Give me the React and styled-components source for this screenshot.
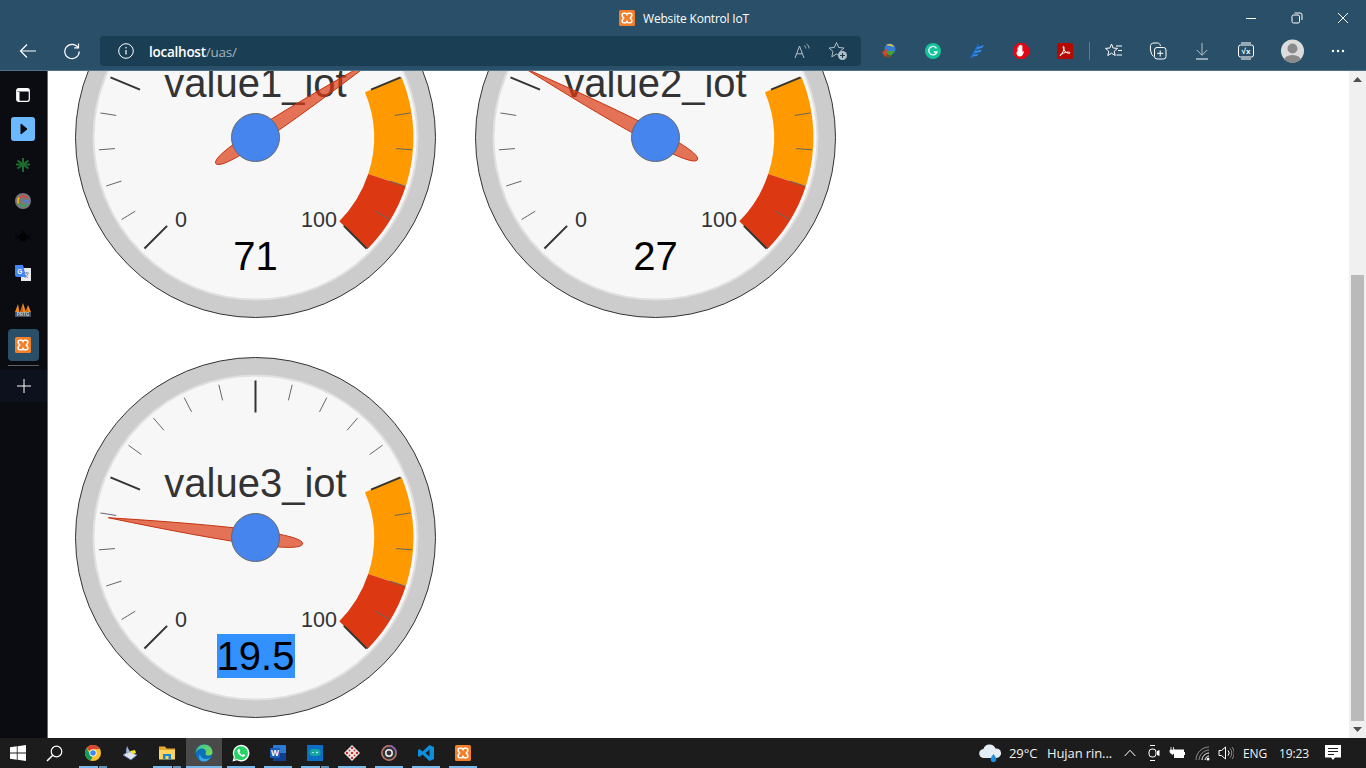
import React from "react";
import styled, { createGlobalStyle } from "styled-components";

const GlobalStyle = createGlobalStyle`
  html, body {
    margin: 0;
    padding: 0;
    overflow: hidden;
    background: #fff;
    font-family: "Open Sans", "Liberation Sans", sans-serif;
  }
`;

const Window = styled.div`
  width: 1366px;
  height: 768px;
  display: flex;
  flex-direction: column;
  overflow: hidden;
`;

const TitleBar = styled.div`
  height: 36px;
  flex: none;
  background: #2a5069;
  display: grid;
  grid-template-columns: 1fr auto 1fr;
  align-items: center;
  color: #fff;
`;

const TitleText = styled.div`
  grid-column: 2;
  display: flex;
  align-items: center;
  gap: 8px;
  font-size: 12px;
  letter-spacing: -0.2px;
  padding-left: 2px;
`;

const WindowControls = styled.div`
  grid-column: 3;
  justify-self: end;
  display: flex;
`;

const ControlSlot = styled.div`
  width: 46px;
  height: 36px;
  display: flex;
  align-items: center;
  justify-content: center;
`;

const Toolbar = styled.div`
  height: 34px;
  flex: none;
  background: #2a5069;
  border-bottom: 1px solid #4f7489;
  display: flex;
  align-items: flex-start;
  padding-left: 6px;
`;

const ToolButton = styled.div`
  width: 44px;
  height: 30px;
  flex: none;
  margin-left: ${(props) => props.$shift || 0}px;
  display: flex;
  align-items: center;
  justify-content: center;
`;

const AddressBar = styled.div`
  width: 761px;
  height: 30px;
  margin: 0 6px 0 6px;
  flex: none;
  box-sizing: border-box;
  background: #1a3e54;
  border-radius: 4px;
  display: flex;
  align-items: center;
  padding: 0 5px 0 18px;
  color: #fff;
`;

const AddressAction = styled.div`
  width: 36px;
  height: 30px;
  flex: none;
  display: flex;
  align-items: center;
  justify-content: center;
`;

const Url = styled.div`
  margin-left: 15px;
  padding-top: 1px;
  flex: 1;
  font-size: 13.5px;
  font-weight: 600;
  letter-spacing: -0.25px;
  span {
    font-weight: 400;
    color: #a3b3bd;
  }
`;

const Divider = styled.div`
  width: 1px;
  height: 18px;
  margin: 6px 2px 0 2px;
  background: #5d7c8f;
  flex: none;
`;

const Main = styled.div`
  flex: 1;
  min-height: 0;
  display: flex;
`;

const Sidebar = styled.div`
  width: 46px;
  padding: 12px 1px 0 0;
  flex: none;
  background: #0a0c12;
  border-right: 1px solid #4f7489;
  display: flex;
  flex-direction: column;
  align-items: center;
`;

const TabSlot = styled.div`
  height: 24px;
  margin-bottom: 4px;
  flex: none;
  display: flex;
  align-items: center;
  justify-content: center;
`;

const SideSlot = styled.div`
  width: 31px;
  height: 36px;
  flex: none;
  display: flex;
  align-items: center;
  justify-content: center;
`;

const ActiveSlot = styled.div`
  width: 31px;
  height: 32px;
  margin-top: 2px;
  flex: none;
  background: #2a5069;
  border-radius: 4px;
  display: flex;
  align-items: center;
  justify-content: center;
`;

const SideRule = styled.div`
  width: 31px;
  height: 1px;
  margin-top: 4px;
  flex: none;
  background: #5b5e63;
`;

const AddSlot = styled.div`
  width: 47px;
  height: 32px;
  margin: 4px -1px 0 0;
  flex: none;
  background: #0d111d;
  display: flex;
  align-items: center;
  justify-content: center;
`;

const Page = styled.div`
  flex: 1;
  min-width: 0;
  overflow: hidden;
  background: #fff;
`;

const GaugeGrid = styled.div`
  display: grid;
  grid-template-columns: repeat(2, 400px);
  grid-auto-rows: 400px;
  margin: -133px 0 0 8px;
`;

const GaugeSvg = styled.svg`
  display: block;
  font-family: "Liberation Sans", Arial, sans-serif;
`;

const Scrollbar = styled.div`
  width: 17px;
  flex: none;
  background: #f0f0f0;
  display: flex;
  flex-direction: column;
  align-items: center;
`;

const ScrollArrow = styled.div`
  height: 17px;
  flex: none;
  display: flex;
  align-items: center;
  justify-content: center;
`;

const ScrollTrack = styled.div`
  flex: 1;
  align-self: stretch;
  padding: 187px 2px 0 2px;
  min-height: 0;
`;

const ScrollThumb = styled.div`
  height: 446px;
  background: #bababa;
`;

const Taskbar = styled.div`
  height: 30px;
  flex: none;
  background: #1c1c1c;
  display: flex;
  align-items: stretch;
  color: #fff;
`;

const TaskStart = styled.div`
  width: 36px;
  flex: none;
  display: flex;
  align-items: center;
  justify-content: center;
`;

const TaskApps = styled.div`
  display: flex;
  gap: 1px;
  margin-left: 3px;
  flex: 1;
`;

const TaskApp = styled.div`
  width: 36px;
  position: relative;
  display: flex;
  align-items: center;
  justify-content: center;
  background: ${(props) => (props.$active ? "#4a4a4a" : "transparent")};

  &::after {
    content: "";
    display: ${(props) => (props.$running ? "block" : "none")};
    position: absolute;
    left: ${(props) => (props.$active ? "0" : "4px")};
    right: ${(props) => (props.$active ? "0" : "4px")};
    bottom: 0;
    height: 2px;
    background: ${(props) =>
      props.$split
        ? "linear-gradient(90deg, #76b9ed 0 68%, #1c1c1c 68% 72%, #5d93b8 72%)"
        : "#76b9ed"};
  }
`;

const Tray = styled.div`
  display: flex;
  align-items: center;
  flex: none;
  color: #f2f2f2;
`;

const TrayText = styled.div`
  margin-left: ${(props) => props.$left}px;
  width: ${(props) => props.$width}px;
  white-space: nowrap;
  font-size: ${(props) => props.$size || 13}px;
  letter-spacing: -0.1px;
`;

const TrayIcon = styled.div`
  margin-left: ${(props) => props.$left}px;
  width: ${(props) => props.$width}px;
  flex: none;
  display: flex;
  align-items: center;
  justify-content: center;
`;

const CX = 199.5;
const CY = 199.5;

function polar(r, deg) {
  const a = ((deg - 90) * Math.PI) / 180;
  return [CX + r * Math.cos(a), CY + r * Math.sin(a)];
}

function toAngle(value) {
  return -135 + (value / 100) * 270;
}

function bandPath(from, to) {
  const a0 = toAngle(from);
  const a1 = toAngle(to);
  const [x0, y0] = polar(158, a0);
  const [x1, y1] = polar(158, a1);
  const [x2, y2] = polar(118.5, a1);
  const [x3, y3] = polar(118.5, a0);
  return `M${x0} ${y0}A158 158 0 0 1 ${x1} ${y1}L${x2} ${y2}A118.5 118.5 0 0 0 ${x3} ${y3}Z`;
}

function needlePath(value) {
  const a = toAngle(value);
  const dir = (along, side) => {
    const [ax, ay] = polar(along, a);
    const rad = (a * Math.PI) / 180;
    return [ax + side * Math.cos(rad), ay + side * Math.sin(rad)];
  };
  const tip = dir(148.5, 0);
  const tail = dir(-47.5, 0);
  const c1 = dir(-47.5, 14);
  const c2 = dir(-47.5, -14);
  return `M${tip[0]} ${tip[1]}Q${c1[0]} ${c1[1]} ${tail[0]} ${tail[1]}Q${c2[0]} ${c2[1]} ${tip[0]} ${tip[1]}Z`;
}

const ticks = [];
for (let i = 0; i <= 20; i++) {
  ticks.push({ angle: -135 + i * 13.5, major: i % 5 === 0 });
}

function Gauge({ label, value, selected }) {
  const text = String(value);
  return (
    <GaugeSvg width="400" height="400" viewBox="0 0 400 400">
      <circle cx={CX} cy={CY} r="180" fill="#ccc" stroke="#333" strokeWidth="1" />
      <circle cx={CX} cy={CY} r="162" fill="#f7f7f7" stroke="#e0e0e0" strokeWidth="2" />
      <path d={bandPath(75, 90)} fill="#ff9900" />
      <path d={bandPath(90, 100)} fill="#dc3912" />
      {ticks.map((t) => {
        const [x0, y0] = polar(t.major ? 125 : 141, t.angle);
        const [x1, y1] = polar(157, t.angle);
        return (
          <line
            key={t.angle}
            x1={x0}
            y1={y0}
            x2={x1}
            y2={y1}
            stroke={t.major ? "#333" : "#666"}
            strokeWidth={t.major ? 2 : 1}
          />
        );
      })}
      <text x={CX} y={CY - 40.5} fontSize="40" fill="#333" textAnchor="middle">
        {label}
      </text>
      <text x={CX - 74.5} y={CY + 89} fontSize="21.5" fill="#333" textAnchor="middle">
        0
      </text>
      <text x={CX + 63.5} y={CY + 89} fontSize="21.5" fill="#333" textAnchor="middle">
        100
      </text>
      {selected && <rect x={CX - 38.5} y={CY + 96.5} width="78" height="44" fill="#3390ff" />}
      <text x={CX} y={CY + 132} fontSize="40" fill="#000" textAnchor="middle">
        {text}
      </text>
      <path d={needlePath(value)} fill="#dc3912" fillOpacity="0.7" stroke="#c63310" strokeWidth="1" />
      <circle cx={CX} cy={CY} r="24" fill="#4684ee" stroke="#666" strokeWidth="1" />
    </GaugeSvg>
  );
}

const line = { fill: "none", stroke: "#fff", strokeWidth: 1.2 };
const dim = { fill: "none", stroke: "#b4c0c8", strokeWidth: 1 };

function Xampp({ size = 16 }) {
  return (
    <svg width={size} height={size} viewBox="0 0 16 16">
      <rect width="16" height="16" rx="1.5" fill="#f47f2b" />
      <path
        d="M5 3.2h1.6c.8 0 1 .6 1.4 1.4.4-.8.6-1.4 1.4-1.4H11c1.2 0 1.9 1 1.9 2s-.7 1.7-1.6 2.8c.9 1.1 1.6 1.8 1.6 2.8s-.7 2-1.9 2H9.400c-.8 0-1-.6-1.400-1.400-.4.8-.6 1.400-1.400 1.400H5c-1.200 0-1.900-1-1.900-2s.7-1.700 1.600-2.800C3.800 6.900 3.100 6.200 3.100 5.200s.7-2 1.900-2z"
        fill="none"
        stroke="#fff"
        strokeWidth="1.500"
      />
    </svg>
  );
}

function Minimize() {
  return (
    <svg width="12" height="12" viewBox="0 0 12 12">
      <path d="M1 6.500h10" {...line} strokeWidth="1" />
    </svg>
  );
}

function Restore() {
  return (
    <svg width="12" height="12" viewBox="0 0 12 12">
      <rect x="1" y="3" width="7.500" height="8" rx="1.500" {...line} strokeWidth="1" />
      <path d="M3.500 1h5.500a2 2 0 0 1 2 2v5" {...line} strokeWidth="1" />
    </svg>
  );
}

function CloseX() {
  return (
    <svg width="12" height="12" viewBox="0 0 12 12">
      <path d="M1 1l10 10M11 1L1 11" {...line} strokeWidth="1" />
    </svg>
  );
}

function Back() {
  return (
    <svg width="18" height="16" viewBox="0 0 18 16">
      <path d="M17 8H1.500M8 1.500L1.500 8 8 14.500" {...line} />
    </svg>
  );
}

function Reload() {
  return (
    <svg width="18" height="18" viewBox="0 0 18 18">
      <path d="M15 5.500A7.200 7.200 0 1 0 16.200 9.500" {...line} />
      <path d="M15.500 1.500v4.300h-4.300" {...line} />
    </svg>
  );
}

function InfoCircle() {
  return (
    <svg width="16" height="16" viewBox="0 0 16 16">
      <circle cx="8" cy="8" r="7.300" {...line} strokeWidth="1" />
      <path d="M8 7v4.500" {...line} />
      <circle cx="8" cy="4.800" r=".8" fill="#fff" />
    </svg>
  );
}

function ReadAloud() {
  return (
    <svg width="16" height="16" viewBox="0 0 16 16">
      <path d="M1 15L5.500 3 10 15M2.700 10.800h5.600" {...dim} />
      <path d="M10 2.500c1.200.7 1.800 1.800 1.800 3M12.500 1c1.700 1 2.500 2.700 2.500 4.500" {...dim} strokeWidth=".9" />
    </svg>
  );
}

function StarAdd() {
  return (
    <svg width="20" height="20" viewBox="0 0 20 20">
      <path d="M8.500 1.500l2.200 5 5.300.5-4 3.500 1.200 5.300-4.700-2.800-4.700 2.800 1.200-5.300-4-3.500 5.300-.5z" {...dim} />
      <circle cx="14.500" cy="14.500" r="4.500" fill="#b4c0c8" />
      <path d="M14.500 12v5M12 14.500h5" stroke="#1a3e54" strokeWidth="1.100" />
    </svg>
  );
}

function Idm() {
  return (
    <svg width="18" height="18" viewBox="0 0 18 18">
      <circle cx="10" cy="7" r="5.500" fill="#3a7bd5" />
      <path d="M6 3c3-2 7-1 8 2-2-1-5-1-8-2z" fill="#e8c33a" />
      <path d="M2 10l5-3 1 5-3 3z" fill="#d4452c" />
      <path d="M6 9h9l-5 6z" fill="#3aa63a" />
      <path d="M4 14l5 2 3-2-3-1z" fill="#7a4d2a" />
    </svg>
  );
}

function Grammarly() {
  return (
    <svg width="16" height="16" viewBox="0 0 16 16">
      <circle cx="8" cy="8" r="8" fill="#15c39a" />
      <path d="M11.500 5.300A4.200 4.200 0 1 0 12 9H8.800" fill="none" stroke="#fff" strokeWidth="1.300" />
    </svg>
  );
}

function Feather() {
  return (
    <svg width="16" height="16" viewBox="0 0 16 16">
      <path d="M1 15L9 1l1 .5-4 8.500-3 5z" fill="#1d6fd8" />
      <path d="M7.500 4.500L15 2l-1.500 2.500-5.500 2zM6 8l7-1.500-1.500 2.500-6 1.500zM4.500 11.500l5-.5-1.500 2-4.500.5z" fill="#2f8bf0" />
    </svg>
  );
}

function AdBlock() {
  return (
    <svg width="16" height="16" viewBox="0 0 16 16">
      <path d="M4.700 0h6.600L16 4.700v6.600L11.300 16H4.700L0 11.300V4.700z" fill="#e30613" />
      <path
        d="M4.500 8V5c0-1 1.100-1 1.100 0V3c0-1 1.200-1 1.200 0V2.500c0-1 1.300-1 1.300 0V3c0-1 1.300-1 1.300 0v6c.6-1 1.900-.8 1.400.3-.6 1.500-1.300 4.200-3.800 4.200-2.300 0-3.500-1.500-3.500-4z"
        fill="#fff"
      />
    </svg>
  );
}

function PdfIcon() {
  return (
    <svg width="16" height="16" viewBox="0 0 16 16">
      <rect width="16" height="16" rx="1.500" fill="#b30b00" />
      <path
        d="M3 12.500c1.500-.8 3-3 4-6.500.3-1.500-.2-3-.7-2.500-.4.500 0 2.500 1.500 4.500 1.200 1.500 3 2.500 4.700 2.300 1-.2.500-1.200-1-1.200-2 0-4.500.6-6.500 1.800-1.500.9-2.500 1.800-2 1.600z"
        fill="none"
        stroke="#fff"
        strokeWidth="1"
      />
    </svg>
  );
}

function Favorites() {
  return (
    <svg width="18" height="18" viewBox="0 0 18 18">
      <path d="M6.500 2l1.600 4 4.400.4-3.300 2.900 1 4.200-3.700-2.300-3.700 2.300 1-4.200L.5 6.400 4.900 6z" {...line} strokeWidth="1" />
      <path d="M11 4h6M13 8.500h4M11.500 13H17" {...line} strokeWidth="1" />
    </svg>
  );
}

function Collections() {
  return (
    <svg width="18" height="18" viewBox="0 0 18 18">
      <path d="M4.500 14.500C2 12.500 1 8 1.500 3.500 2 1.500 3.500 1 5 1h3.500c1.500 0 2.500 1 3 3" {...line} strokeWidth="1" />
      <rect x="5.500" y="5.500" width="11.500" height="11.500" rx="2.500" {...line} strokeWidth="1" />
      <path d="M11.200 8.500v6M8.200 11.300h6" {...line} strokeWidth="1" />
    </svg>
  );
}

function Download() {
  return (
    <svg width="14" height="18" viewBox="0 0 14 18">
      <path d="M7 1v12M1.800 8L7 13.300 12.200 8" {...dim} />
      <path d="M1 17h12" stroke="#fff" strokeWidth="1" />
    </svg>
  );
}

function MathSolver() {
  return (
    <svg width="16" height="18" viewBox="0 0 16 18">
      <rect x=".5" y="3" width="15" height="12" rx="2" {...line} strokeWidth="1" />
      <path d="M3 1h10M3 17h10" {...line} strokeWidth="1.200" />
      <text x="8" y="12" fontSize="8" fontWeight="700" fill="#fff" textAnchor="middle" fontFamily="Liberation Sans">
        √x
      </text>
    </svg>
  );
}

function Avatar() {
  return (
    <svg width="23" height="24" viewBox="0 0 23 24">
      <defs>
        <clipPath id="avatar-clip">
          <circle cx="11.500" cy="12" r="11.500" />
        </clipPath>
      </defs>
      <circle cx="11.500" cy="12" r="11.500" fill="#dcdcdc" />
      <g clipPath="url(#avatar-clip)" fill="#8a8a8a">
        <circle cx="11.500" cy="9.500" r="5" />
        <ellipse cx="11.500" cy="22" rx="9" ry="6" />
      </g>
    </svg>
  );
}

function More() {
  return (
    <svg width="14" height="4" viewBox="0 0 14 4">
      <circle cx="2" cy="2" r="1.200" fill="#fff" />
      <circle cx="7" cy="2" r="1.200" fill="#fff" />
      <circle cx="12" cy="2" r="1.200" fill="#fff" />
    </svg>
  );
}

function TabsIcon() {
  return (
    <svg width="14" height="14" viewBox="0 0 14 14">
      <rect x=".7" y=".7" width="12.600" height="12.600" rx="2" {...line} />
      <path d="M1 3.500h12V1H1zM1 4v9h2.500V4z" fill="#fff" />
    </svg>
  );
}

function PlayTile() {
  return (
    <svg width="24" height="24" viewBox="0 0 24 24">
      <rect width="24" height="24" rx="3" fill="#6db9ff" />
      <path d="M10 7l6 5-6 5z" fill="#0a0c12" strokeWidth="1" stroke="#0a0c12" />
    </svg>
  );
}

function GreenStar() {
  return (
    <svg width="14" height="14" viewBox="0 0 14 14">
      <path d="M7 0v14M1.500 2.500l11 8M12.500 2.500l-11 8M0 6.500h14" stroke="#1f6b2c" strokeWidth="2" />
    </svg>
  );
}

function GoogleIcon() {
  return (
    <svg width="16" height="16" viewBox="0 0 16 16">
      <circle cx="8" cy="8" r="8" fill="#77777c" />
      <path d="M12 5a5 5 0 0 0-7.600-.5" fill="none" stroke="#ea4335" strokeWidth="1.500" />
      <path d="M4.400 4.500a5 5 0 0 0-.7 6" fill="none" stroke="#fbbc05" strokeWidth="1.500" />
      <path d="M3.700 10.500a5 5 0 0 0 8 .8" fill="none" stroke="#34a853" strokeWidth="1.500" />
      <path d="M11.700 11.300c1-1 1.300-2.200 1.100-3.300H8" fill="none" stroke="#4285f4" strokeWidth="1.500" />
    </svg>
  );
}

function BeeIcon() {
  return (
    <svg width="16" height="12" viewBox="0 0 16 12">
      <path d="M0 4l5 2-5 2M16 4l-5 2 5 2M6 0h4" stroke="#000" strokeWidth="1" fill="none" />
      <ellipse cx="8" cy="6" rx="4" ry="4.500" fill="#020203" />
    </svg>
  );
}

function TranslateIcon() {
  return (
    <svg width="16" height="16" viewBox="0 0 16 16">
      <rect x="6" y="3" width="10" height="13" fill="#e8eaed" />
      <path d="M9 8h5M11.500 7v1.500M13 8.500c-.5 2-2 3.500-3.500 4M10 10c.8 1.300 2 2.300 3 2.800" stroke="#7f8890" strokeWidth=".9" fill="none" />
      <path d="M0 0h8l3 12H2a2 2 0 0 1-2-2z" fill="#4285f4" />
      <text x="4.700" y="8.500" fontSize="6.500" fontWeight="700" fill="#fff" textAnchor="middle" fontFamily="Liberation Sans">
        G
      </text>
    </svg>
  );
}

function PrtgIcon() {
  return (
    <svg width="16" height="16" viewBox="0 0 16 16">
      <path d="M0 11L3 3l1.500 8zM5 11l3-9 3 9zM10.500 11L13 4l3 7z" fill="#f08a1d" />
      <path d="M5 11L8 5v6zM11 11l2-4v4z" fill="#c85f10" />
      <rect y="11" width="16" height="5" fill="#4a5164" />
      <text x="8" y="15" fontSize="4.500" fontWeight="700" fill="#cfd4dc" textAnchor="middle" fontFamily="Liberation Sans">
        PRTG
      </text>
    </svg>
  );
}

function Plus() {
  return (
    <svg width="14" height="14" viewBox="0 0 14 14">
      <path d="M7 0v14M0 7h14" {...line} strokeWidth="1" />
    </svg>
  );
}

function WinLogo() {
  return (
    <svg width="16" height="16" viewBox="0 0 16 16">
      <path d="M0 2.300l6.800-1v6.300H0zM7.600 1.200L16 0v7.600H7.600zM0 8.400h6.800v6.300l-6.800-1zM7.600 8.400H16V16l-8.400-1.200z" fill="#fff" />
    </svg>
  );
}

function SearchIcon() {
  return (
    <svg width="17" height="17" viewBox="0 0 17 17">
      <circle cx="10.500" cy="6.500" r="5.300" {...line} />
      <path d="M6.500 10.500L1 16" {...line} strokeWidth="1.600" />
    </svg>
  );
}

function Chrome() {
  return (
    <svg width="16" height="16" viewBox="0 0 16 16">
      <circle cx="8" cy="8" r="8" fill="#fbc02d" />
      <path d="M8 0a8 8 0 0 1 6.930 4H8a4 4 0 0 0-3.460 2L1.600 3.200A8 8 0 0 1 8 0z" fill="#db4437" />
      <path d="M1.600 3.200l3 5.300a4 4 0 0 0 3 3.400l-2.200 3.700A8 8 0 0 1 1.600 3.200z" fill="#0f9d58" />
      <circle cx="8" cy="8" r="3.600" fill="#fff" />
      <circle cx="8" cy="8" r="2.800" fill="#4285f4" />
    </svg>
  );
}

function Scanner() {
  return (
    <svg width="16" height="18" viewBox="0 0 16 18">
      <path d="M1 11l6-4 8 4-6 5z" fill="#dfe3ee" stroke="#5b6fa8" strokeWidth="1" />
      <path d="M5 2l3 6-3 2-1-3z" fill="#9fb2de" />
      <path d="M8 7l5-1 1 3-4 1z" fill="#f5e71e" />
    </svg>
  );
}

function Explorer() {
  return (
    <svg width="16" height="16" viewBox="0 0 16 16">
      <path d="M0 1.500h6l1.500 2H16V14H0z" fill="#e8a92a" />
      <path d="M0 5h16v9.500H0z" fill="#fbd560" />
      <path d="M4 9h8v5.500H9.500V11h-3v3.500H4z" fill="#1d87d6" />
    </svg>
  );
}

function Edge() {
  return (
    <svg width="18" height="18" viewBox="0 0 18 18">
      <defs>
        <linearGradient id="edge-a" x1="0" y1="0" x2="1" y2="1">
          <stop offset="0" stopColor="#2ec5a0" />
          <stop offset="1" stopColor="#86d94a" />
        </linearGradient>
      </defs>
      <circle cx="9" cy="9" r="8.500" fill="#0c6fb8" />
      <path d="M.5 9C1.500 3.500 5 .5 9 .5c5 0 8.500 3.500 8.500 8 0 2-2 3-4 3-1.500 0-3-.5-3-1.500C12 7 10 4.500 7 4.500 4 4.500 2 6 .5 9z" fill="url(#edge-a)" />
      <path d="M5 9.500c0 3 2.500 5.500 6 5.500 2 0 4-1 5-2.500-1.500 3-4 5-7 5-2 0-3-.5-4-1.500C3.500 14.500 4 11.500 5 9.500z" fill="#39a7e8" />
    </svg>
  );
}

function Whatsapp() {
  return (
    <svg width="18" height="18" viewBox="0 0 18 18">
      <path d="M.5 17.500l1.300-4.500A8.300 8.300 0 1 1 5 16.300z" fill="#fff" />
      <path d="M2.200 15.800l.9-3A6.900 6.900 0 1 1 5.300 15z" fill="#25d366" />
      <path d="M6.500 5c-1 .8-1.300 2-.5 3.700 1 2 2.800 3.500 4.700 4 1.300.2 2.300-.5 2.500-1.700l-2-1-.9 1c-1.200-.5-2.300-1.600-2.900-2.900l.8-.9L7.700 5z" fill="#fff" />
    </svg>
  );
}

function Word() {
  return (
    <svg width="16" height="16" viewBox="0 0 16 16">
      <rect x="3" width="13" height="16" rx="1" fill="#2b7cd3" />
      <path d="M3 8h13v8H4a1 1 0 0 1-1-1z" fill="#103f91" />
      <rect y="3" width="10" height="10" rx="1" fill="#185abd" />
      <text x="5" y="11" fontSize="8.500" fontWeight="700" fill="#fff" textAnchor="middle" fontFamily="Liberation Sans">
        W
      </text>
    </svg>
  );
}

function ArduinoIcon() {
  return (
    <svg width="16" height="16" viewBox="0 0 16 16">
      <rect width="16" height="16" fill="#0a6fc2" />
      <rect x="2.500" y="4" width="11" height="7" rx="3.500" fill="#17a6a0" />
      <path d="M5 7.500h2M9 7.500h2M10 6.500v2" stroke="#d6f2ee" strokeWidth=".8" />
    </svg>
  );
}

function DiamondIcon() {
  return (
    <svg width="16" height="16" viewBox="0 0 16 16">
      <path d="M8 0l8 8-8 8-8-8z" fill="#eee" />
      <g fill="#c4342c">
        <circle cx="8" cy="3" r="1.300" />
        <circle cx="8" cy="13" r="1.300" />
        <circle cx="3" cy="8" r="1.300" />
        <circle cx="13" cy="8" r="1.300" />
        <circle cx="8" cy="8" r="1.300" />
        <circle cx="5.500" cy="5.500" r="1" />
        <circle cx="10.500" cy="5.500" r="1" />
        <circle cx="5.500" cy="10.500" r="1" />
        <circle cx="10.500" cy="10.500" r="1" />
      </g>
    </svg>
  );
}

function DiscIcon() {
  return (
    <svg width="16" height="16" viewBox="0 0 16 16">
      <circle cx="8" cy="8" r="7.200" fill="#33333a" stroke="#c77c6a" strokeWidth="1.500" />
      <path d="M8 .8a7.200 7.200 0 0 1 7.200 7.200" fill="none" stroke="#8a5fc0" strokeWidth="1.500" />
      <circle cx="8" cy="8" r="3.200" fill="none" stroke="#eee" strokeWidth="1.500" />
    </svg>
  );
}

function VsCode() {
  return (
    <svg width="16" height="16" viewBox="0 0 16 16">
      <path d="M11.500 0L16 2v12l-4.500 2L4.500 9.500 1.500 12 0 11V5l1.500-1 3 2.500zM11.500 4.500L7.500 8l4 3.500z" fill="#0e8fdd" />
    </svg>
  );
}

function Cloud() {
  return (
    <svg width="23" height="20" viewBox="0 0 23 20">
      <path d="M5 15a4.500 4.500 0 0 1-.6-9A6.500 6.500 0 0 1 16.500 5.500 4.800 4.800 0 0 1 18 15z" fill="#e4ecf4" />
      <path d="M14.500 11c1.500 2 2.800 3.500 2.800 5.300a2.800 2.800 0 0 1-5.600 0c0-1.800 1.300-3.300 2.800-5.300z" fill="#1f8fe0" />
    </svg>
  );
}

function Caret() {
  return (
    <svg width="12" height="8" viewBox="0 0 12 8">
      <path d="M.7 7L6 1.300 11.300 7" {...line} strokeWidth="1" />
    </svg>
  );
}

function Meet() {
  return (
    <svg width="12" height="18" viewBox="0 0 12 18">
      <path d="M2 1.500h5M2 16.500h5" {...line} strokeWidth="1" />
      <rect x="1" y="5" width="7" height="8" rx="3" {...line} strokeWidth="1" />
      <path d="M9 7l2.500-1v6L9 11z" fill="#fff" />
    </svg>
  );
}

function Battery() {
  return (
    <svg width="16" height="14" viewBox="0 0 16 14">
      <path d="M2 1v3M4.500 1v3M1 4h5v2.500L3.500 8.500 1 6.500z" fill="#fff" stroke="#fff" strokeWidth=".8" />
      <rect x="5.500" y="4" width="9" height="7.500" fill="#fff" stroke="#fff" />
      <rect x="15" y="6" width="1" height="3" fill="#fff" />
    </svg>
  );
}

function Wifi() {
  return (
    <svg width="15" height="15" viewBox="0 0 15 15">
      <path d="M1 14C1 7 7 1 14 1M4 14c0-5 5-10 10-10" fill="none" stroke="#8d8d8d" strokeWidth="1" />
      <path d="M7 14c0-3.500 3.500-7 7-7M10 14c0-1.800 2-4 4-4" fill="none" stroke="#fff" strokeWidth="1" />
      <circle cx="13" cy="13" r="1.500" fill="#fff" />
    </svg>
  );
}

function Volume() {
  return (
    <svg width="16" height="16" viewBox="0 0 16 16">
      <path d="M1 5.500h2.500L7.500 2v12l-4-3.500H1z" {...line} strokeWidth="1" />
      <path d="M10 5.500a3.500 3.500 0 0 1 0 5" {...line} strokeWidth="1" />
      <path d="M12 3.500a6.500 6.500 0 0 1 0 9M14 2a9 9 0 0 1 0 12" fill="none" stroke="#8d8d8d" strokeWidth="1" />
    </svg>
  );
}

function Notice() {
  return (
    <svg width="16" height="16" viewBox="0 0 16 16">
      <path d="M0 0h16v12.500h-6L8 15l-2-2.500H0z" fill="#fff" />
      <path d="M3 3.500h10M3 6.500h10M3 9.500h6" stroke="#1c1c1c" strokeWidth="1" />
    </svg>
  );
}

const extensions = [Idm, Grammarly, Feather, AdBlock, PdfIcon];
const toolIcons = [Favorites, Collections, Download, MathSolver];
const sideIcons = [PlayTile, GreenStar, GoogleIcon, BeeIcon, TranslateIcon, PrtgIcon];

const taskApps = [
  { Icon: Chrome, running: true, split: true },
  { Icon: Scanner },
  { Icon: Explorer, running: true, split: true },
  { Icon: Edge, running: true, active: true },
  { Icon: Whatsapp, running: true },
  { Icon: Word, running: true },
  { Icon: ArduinoIcon, running: true, split: true },
  { Icon: DiamondIcon, running: true },
  { Icon: DiscIcon, running: true },
  { Icon: VsCode, running: true },
  { Icon: Xampp, running: true },
];

function App() {
  return (
    <Window>
      <GlobalStyle />
      <TitleBar>
        <TitleText>
          <Xampp />
          Website Kontrol IoT
        </TitleText>
        <WindowControls>
          <ControlSlot>
            <Minimize />
          </ControlSlot>
          <ControlSlot>
            <Restore />
          </ControlSlot>
          <ControlSlot>
            <CloseX />
          </ControlSlot>
        </WindowControls>
      </TitleBar>
      <Toolbar>
        <ToolButton>
          <Back />
        </ToolButton>
        <ToolButton>
          <Reload />
        </ToolButton>
        <AddressBar>
          <InfoCircle />
          <Url>
            localhost<span>/uas/</span>
          </Url>
          <AddressAction>
            <ReadAloud />
          </AddressAction>
          <AddressAction>
            <StarAdd />
          </AddressAction>
        </AddressBar>
        {extensions.map((Icon, i) => (
          <ToolButton key={i}>
            <Icon />
          </ToolButton>
        ))}
        <Divider />
        {toolIcons.map((Icon, i) => (
          <ToolButton key={i}>
            <Icon />
          </ToolButton>
        ))}
        <ToolButton $shift={2}>
          <Avatar />
        </ToolButton>
        <ToolButton $shift={2}>
          <More />
        </ToolButton>
      </Toolbar>
      <Main>
        <Sidebar>
          <TabSlot>
            <TabsIcon />
          </TabSlot>
          {sideIcons.map((Icon, i) => (
            <SideSlot key={i}>
              <Icon />
            </SideSlot>
          ))}
          <ActiveSlot>
            <Xampp />
          </ActiveSlot>
          <SideRule />
          <AddSlot>
            <Plus />
          </AddSlot>
        </Sidebar>
        <Page>
          <GaugeGrid>
            <Gauge label="value1_iot" value={71} />
            <Gauge label="value2_iot" value={27} />
            <Gauge label="value3_iot" value={19.5} selected />
          </GaugeGrid>
        </Page>
        <Scrollbar>
          <ScrollArrow>
            <svg width="9" height="5" viewBox="0 0 9 5">
              <path d="M4.500 0L9 5H0z" fill="#505050" />
            </svg>
          </ScrollArrow>
          <ScrollTrack>
            <ScrollThumb />
          </ScrollTrack>
          <ScrollArrow>
            <svg width="9" height="5" viewBox="0 0 9 5">
              <path d="M4.500 5L9 0H0z" fill="#505050" />
            </svg>
          </ScrollArrow>
        </Scrollbar>
      </Main>
      <Taskbar>
        <TaskStart>
          <WinLogo />
        </TaskStart>
        <TaskStart>
          <SearchIcon />
        </TaskStart>
        <TaskApps>
          {taskApps.map(({ Icon, running, split, active }, i) => (
            <TaskApp key={i} $running={running} $split={split} $active={active}>
              <Icon />
            </TaskApp>
          ))}
        </TaskApps>
        <Tray>
          <TrayIcon $left={0} $width={24}>
            <Cloud />
          </TrayIcon>
          <TrayText $left={7} $width={38}>
            29°C
          </TrayText>
          <TrayText $left={0} $width={76}>
            Hujan rin...
          </TrayText>
          <TrayIcon $left={0} $width={14}>
            <Caret />
          </TrayIcon>
          <TrayIcon $left={10} $width={14}>
            <Meet />
          </TrayIcon>
          <TrayIcon $left={8} $width={16}>
            <Battery />
          </TrayIcon>
          <TrayIcon $left={9} $width={16}>
            <Wifi />
          </TrayIcon>
          <TrayIcon $left={8} $width={16}>
            <Volume />
          </TrayIcon>
          <TrayText $left={9} $width={36} $size={12}>
            ENG
          </TrayText>
          <TrayText $left={0} $width={42} $size={12}>
            19:23
          </TrayText>
          <TrayIcon $left={4} $width={16}>
            <Notice />
          </TrayIcon>
          <TrayIcon $left={25} $width={0} />
        </Tray>
      </Taskbar>
    </Window>
  );
}

export default App;
